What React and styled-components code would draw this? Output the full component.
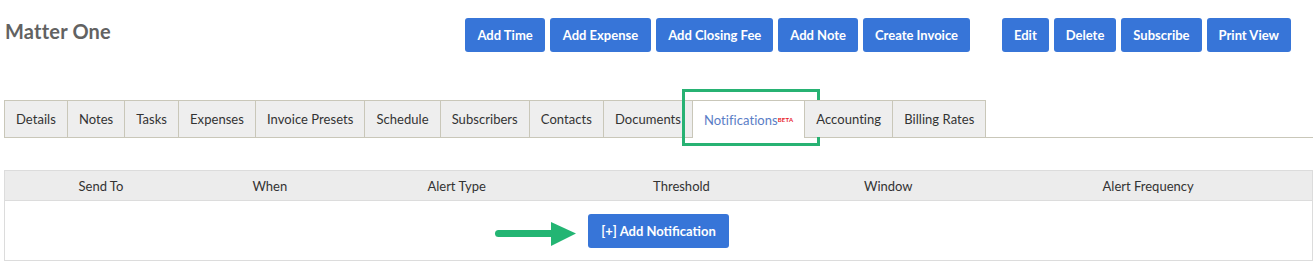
import React from "react";
import styled, { createGlobalStyle } from "styled-components";

const Global = createGlobalStyle`
  html, body { margin: 0; padding: 0; background: #fff; }
  body { font-family: Lato, "Open Sans", Arial, sans-serif; color: #333; }
  * { box-sizing: border-box; }
`;

const Page = styled.div`
  width: 1316px;
  padding: 18px 3px 0 4px;
`;

const Header = styled.div`
  display: flex;
  align-items: flex-start;
`;

const Title = styled.h1`
  margin: 0;
  padding: 1px 0 0 1px;
  font-size: 20px;
  line-height: 24px;
  font-weight: 700;
  color: #626262;
  letter-spacing: 0.2px;
`;

const Actions = styled.div`
  margin-left: auto;
  margin-right: 22px;
  display: flex;
  gap: 32px;
`;

const Group = styled.div`
  display: flex;
  gap: 5px;
`;

const Button = styled.button`
  height: 34px;
  padding: 0 ${(p) => p.$pad ?? 12}px;
  border: none;
  border-radius: 3px;
  background: #3775d8;
  color: #fff;
  font-family: inherit;
  font-size: 13px;
  font-weight: 700;
  cursor: pointer;
  white-space: nowrap;
`;

const TabBar = styled.div`
  margin-top: 48px;
  display: flex;
  align-items: flex-end;
  border-bottom: 1px solid #c9c7b9;
  height: 38px;
`;

const Tab = styled.div`
  position: relative;
  height: ${(p) => (p.$active ? 38 : 37)}px;
  margin-bottom: ${(p) => (p.$active ? -1 : 0)}px;
  padding: 0 11px;
  display: flex;
  align-items: center;
  background: ${(p) => (p.$active ? "#fff" : "#eeeeee")};
  border: 1px solid #c9c7b9;
  border-bottom: 0;
  margin-left: -1px;
  &:first-child { margin-left: 0; }
  font-size: 13px;
  letter-spacing: 0.05px;
  color: ${(p) => (p.$active ? "#5a7dc6" : "#333")};
  white-space: nowrap;
`;

const Beta = styled.sup`
  font-size: 6px;
  font-weight: 700;
  color: #e8202a;
  vertical-align: 1px;
  letter-spacing: 0.2px;
`;

const Highlight = styled.div`
  position: absolute;
  left: -11px;
  top: -12px;
  width: 138px;
  height: 57px;
  border: 3px solid #27b273;
  pointer-events: none;
`;

const Table = styled.div`
  margin-top: 32px;
  border: 1px solid #dcdcdc;
`;

const HeadRow = styled.div`
  display: grid;
  grid-template-columns: 192fr 146fr 228fr 222fr 192fr 328fr;
  height: 30px;
  align-items: center;
  background: #ececec;
  border-bottom: 1px solid #dcdcdc;
`;

const HeadCell = styled.div`
  text-align: center;
  font-size: 13px;
  color: #333;
`;

const Body = styled.div`
  display: flex;
  justify-content: center;
  padding: 13px 0 12px;
`;

const AddWrap = styled.div`
  position: relative;
`;

const Arrow = styled.svg`
  position: absolute;
  right: calc(100% + 12px);
  top: 7px;
`;

const tabs = [
  "Details",
  "Notes",
  "Tasks",
  "Expenses",
  "Invoice Presets",
  "Schedule",
  "Subscribers",
  "Contacts",
  "Documents",
  "Notifications",
  "Accounting",
  "Billing Rates",
];

const cols = ["Send To", "When", "Alert Type", "Threshold", "Window", "Alert Frequency"];

export default function App() {
  return (
    <>
      <Global />
      <Page>
        <Header>
          <Title>Matter One</Title>
          <Actions>
            <Group>
              <Button>Add Time</Button>
              <Button $pad={13}>Add Expense</Button>
              <Button>Add Closing Fee</Button>
              <Button>Add Note</Button>
              <Button>Create Invoice</Button>
            </Group>
            <Group>
              <Button>Edit</Button>
              <Button>Delete</Button>
              <Button>Subscribe</Button>
              <Button>Print View</Button>
            </Group>
          </Actions>
        </Header>

        <TabBar>
          {tabs.map((t) =>
            t === "Notifications" ? (
              <Tab key={t} $active>
                Notifications<Beta>BETA</Beta>
                <Highlight />
              </Tab>
            ) : (
              <Tab key={t}>{t}</Tab>
            )
          )}
        </TabBar>

        <Table>
          <HeadRow>
            {cols.map((c) => (
              <HeadCell key={c}>{c}</HeadCell>
            ))}
          </HeadRow>
          <Body>
            <AddWrap>
              <Arrow width="82" height="26" viewBox="0 0 82 26">
                <rect x="1" y="9" width="60" height="7" rx="3.5" fill="#23b573" />
                <polygon points="57,1 82,12.5 57,25" fill="#23b573" />
              </Arrow>
              <Button $pad={13}>[+] Add Notification</Button>
            </AddWrap>
          </Body>
        </Table>
      </Page>
    </>
  );
}
